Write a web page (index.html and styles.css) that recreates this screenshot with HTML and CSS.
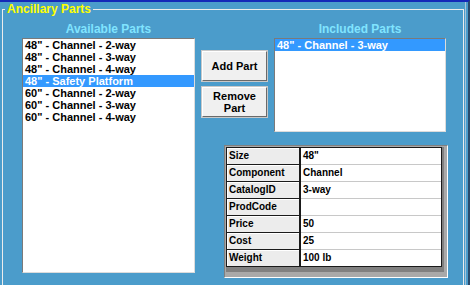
FILE: index.html
```html
<!DOCTYPE html>
<html lang="en">
<head>
    <meta charset="UTF-8">
    <meta name="viewport" content="width=device-width, initial-scale=1.0">
    <title>Ancillary Parts</title>
    <link rel="stylesheet" href="styles.css">
</head>
<body>
    <div class="window">
        <fieldset class="group">
            <legend>Ancillary Parts</legend>
            <div class="layout">
                <div class="col-available">
                    <div class="heading">Available Parts</div>
                    <ul class="listbox listbox-tall">
                        <li>48" - Channel - 2-way</li>
                        <li>48" - Channel - 3-way</li>
                        <li>48" - Channel - 4-way</li>
                        <li class="selected">48" - Safety Platform</li>
                        <li>60" - Channel - 2-way</li>
                        <li>60" - Channel - 3-way</li>
                        <li>60" - Channel - 4-way</li>
                    </ul>
                </div>

                <div class="col-right">
                    <div class="top-row">
                        <div class="buttons">
                            <button type="button">Add Part</button>
                            <button type="button">Remove<br>Part</button>
                        </div>
                        <div class="col-included">
                            <div class="heading">Included Parts</div>
                            <ul class="listbox listbox-short">
                                <li class="selected">48" - Channel - 3-way</li>
                            </ul>
                        </div>
                    </div>

                    <div class="grid-panel">
                        <div class="grid-area">
                            <table class="props">
                                <tr><td class="key">Size</td><td class="val">48"</td></tr>
                                <tr><td class="key">Component</td><td class="val">Channel</td></tr>
                                <tr><td class="key">CatalogID</td><td class="val">3-way</td></tr>
                                <tr><td class="key">ProdCode</td><td class="val"></td></tr>
                                <tr><td class="key">Price</td><td class="val">50</td></tr>
                                <tr><td class="key">Cost</td><td class="val">25</td></tr>
                                <tr><td class="key">Weight</td><td class="val">100 lb</td></tr>
                            </table>
                        </div>
                    </div>
                </div>
            </div>
        </fieldset>
    </div>
</body>
</html>
```

FILE: styles.css
```css
body {
    margin: 0;
    font-family: "Liberation Sans", Arial, sans-serif;
    background-color: #4b9ccb;
}
.window {
    width: 470px;
    height: 285px;
    box-sizing: border-box;
    border-top: 2px solid #1428b8;
    border-right: 2px solid #2a4a6c;
    box-shadow: inset -2px 0 0 #4b9ccb, inset -3px 0 0 #a9c3d8;
    overflow: hidden;
}
.group {
    width: 462px;
    margin: 0 0 0 2px;
    padding: 0;
    box-sizing: border-box;
    border: 1px solid #ececec;
    min-width: 0;
}
.group legend {
    margin-left: 2px;
    padding: 0 2px;
    font-size: 12px;
    line-height: 14px;
    font-weight: bold;
    color: #ffff00;
}
.layout {
    display: flex;
    gap: 7px;
    padding: 6px 0 9px 19px;
}
.heading {
    font-size: 12px;
    line-height: 14px;
    font-weight: bold;
    color: #80e4ff;
    text-align: center;
    margin-bottom: 2px;
}
.listbox {
    list-style: none;
    margin: 0;
    padding: 0;
    box-sizing: border-box;
    background: white;
    border: 1px solid;
    border-color: #7a7a7a #dcdcdc #dcdcdc #7a7a7a;
    font-size: 11px;
    line-height: 12px;
    font-weight: bold;
    color: black;
    white-space: nowrap;
}
.listbox li {
    padding-left: 2px;
}
.listbox .selected {
    background-color: #3399ff;
    color: white;
}
.col-available {
    width: 173px;
}
.listbox-tall {
    height: 235px;
}
.col-right {
    display: flex;
    flex-direction: column;
}
.top-row {
    display: flex;
    gap: 7px;
}
.buttons {
    display: flex;
    flex-direction: column;
    gap: 6px;
    margin-top: 29px;
}
.buttons button {
    width: 65px;
    height: 30px;
    padding: 0;
    background: #f0f0f0;
    border: 1px solid;
    border-color: #ffffff #6a6a6a #6a6a6a #ffffff;
    box-shadow: 0 0 0 1px #c8c8c8;
    font-family: "Liberation Sans", Arial, sans-serif;
    font-size: 11px;
    line-height: 12px;
    font-weight: bold;
    color: black;
}
.col-included {
    width: 172px;
}
.listbox-short {
    height: 94px;
}
.grid-panel {
    width: 224px;
    height: 133px;
    box-sizing: border-box;
    margin: 13px 0 0 22px;
    padding: 1px 3px 5px 1px;
    background: #a9a9a9;
    border: 1px solid;
    border-color: #808080 #ffffff #ffffff #808080;
}
.grid-area {
    height: 125px;
    background: #808080;
}
.props {
    width: 216px;
    border-collapse: separate;
    border-spacing: 0;
    border: 1px solid #1a1a1a;
    font-size: 10px;
    font-weight: bold;
    color: black;
}
.props td {
    height: 16px;
    padding: 0 0 0 2px;
    line-height: 16px;
    white-space: nowrap;
}
.props .key {
    width: 70px;
    background: #ececec;
    box-shadow: inset 1px 1px 0 #ffffff;
    border-bottom: 1px solid #1a1a1a;
    border-right: 2px solid #1a1a1a;
}
.props .val {
    background: white;
    border-bottom: 1px solid #c8c8c8;
}
.props tr:last-child td {
    border-bottom: none;
}
```
